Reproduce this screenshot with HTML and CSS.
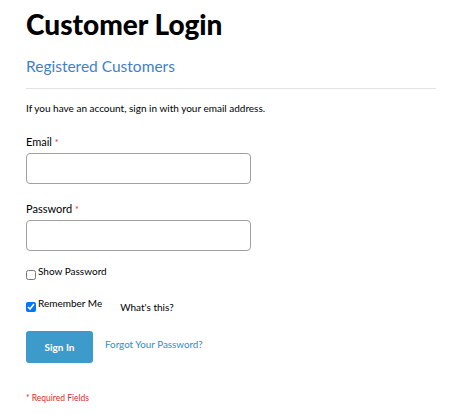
FILE: index.html
```html
<!DOCTYPE html>
<html>
<head>
<meta charset="utf-8">
<link rel="stylesheet" href="styles.css">
</head>
<body>
<div class="page">
  <h1 class="title">Customer Login</h1>
  <h2 class="subtitle">Registered Customers</h2>
  <p class="intro">If you have an account, sign in with your email address.</p>
  <form class="form">
    <div class="field">
      <label class="label">Email <span class="req">*</span></label>
      <input class="input" type="email">
    </div>
    <div class="field">
      <label class="label">Password <span class="req">*</span></label>
      <input class="input" type="password">
    </div>
    <div class="check-row show">
      <input type="checkbox" class="cb">
      <span class="cb-label">Show Password</span>
    </div>
    <div class="check-row remember">
      <input type="checkbox" class="cb" checked>
      <span class="cb-label">Remember Me</span>
      <span class="whats">What's this?</span>
    </div>
    <div class="actions">
      <button type="button" class="btn">Sign In</button>
      <a class="forgot">Forgot Your Password?</a>
    </div>
    <div class="required">* Required Fields</div>
  </form>
</div>
</body>
</html>
```
FILE: styles.css
```css
html, body {
  margin: 0;
  padding: 0;
  background: #fff;
}
.page {
  padding: 8px 19px 0 26px;
  font-family: Lato, "Open Sans", sans-serif;
  color: #000;
}
.title {
  margin: 0;
  font-size: 28px;
  font-weight: 900;
  line-height: 32px;
}
.subtitle {
  margin: 17px 0 0;
  font-size: 15.5px;
  font-weight: 400;
  color: #3f7fcc;
  line-height: 18px;
  padding-bottom: 13px;
  border-bottom: 1px solid #e3e3e3;
}
.intro {
  margin: 12px 0 0;
  font-size: 10px;
  line-height: 14px;
}
.form {
  margin-top: 20px;
}
.field {
  display: flex;
  flex-direction: column;
  margin-bottom: 18px;
}
.label {
  font-size: 11px;
  line-height: 14px;
  margin-bottom: 3px;
}
.req {
  color: #e02b27;
  font-size: 9px;
  margin-left: 0;
}
.input {
  box-sizing: border-box;
  width: 225px;
  height: 31px;
  border: 1px solid #a0a0a0;
  border-radius: 4px;
  margin: 0;
}
.check-row {
  display: flex;
  align-items: flex-end;
  font-size: 10px;
  line-height: 12px;
}
.show {
  margin-top: -1px;
}
.remember {
  margin-top: 20px;
}
.cb {
  width: 10px;
  height: 10px;
  margin: 0 2px 0 0;
}
.cb-label {
  position: relative;
  top: -3px;
}
.whats {
  margin-left: 18px;
  font-size: 10px;
  position: relative;
  top: 1px;
}
.actions {
  display: flex;
  align-items: center;
  margin-top: 19px;
}
.btn {
  width: 67px;
  height: 32px;
  border: 0;
  border-radius: 3px;
  background: #3d9bcc;
  color: #fff;
  font-family: inherit;
  font-size: 10px;
  font-weight: 700;
  padding: 0;
}
.forgot {
  margin-left: 12px;
  font-size: 9.8px;
  color: #2d8ec9;
  position: relative;
  top: -3px;
}
.required {
  margin-top: 30px;
  font-size: 8.5px;
  color: #e02b27;
}
```
